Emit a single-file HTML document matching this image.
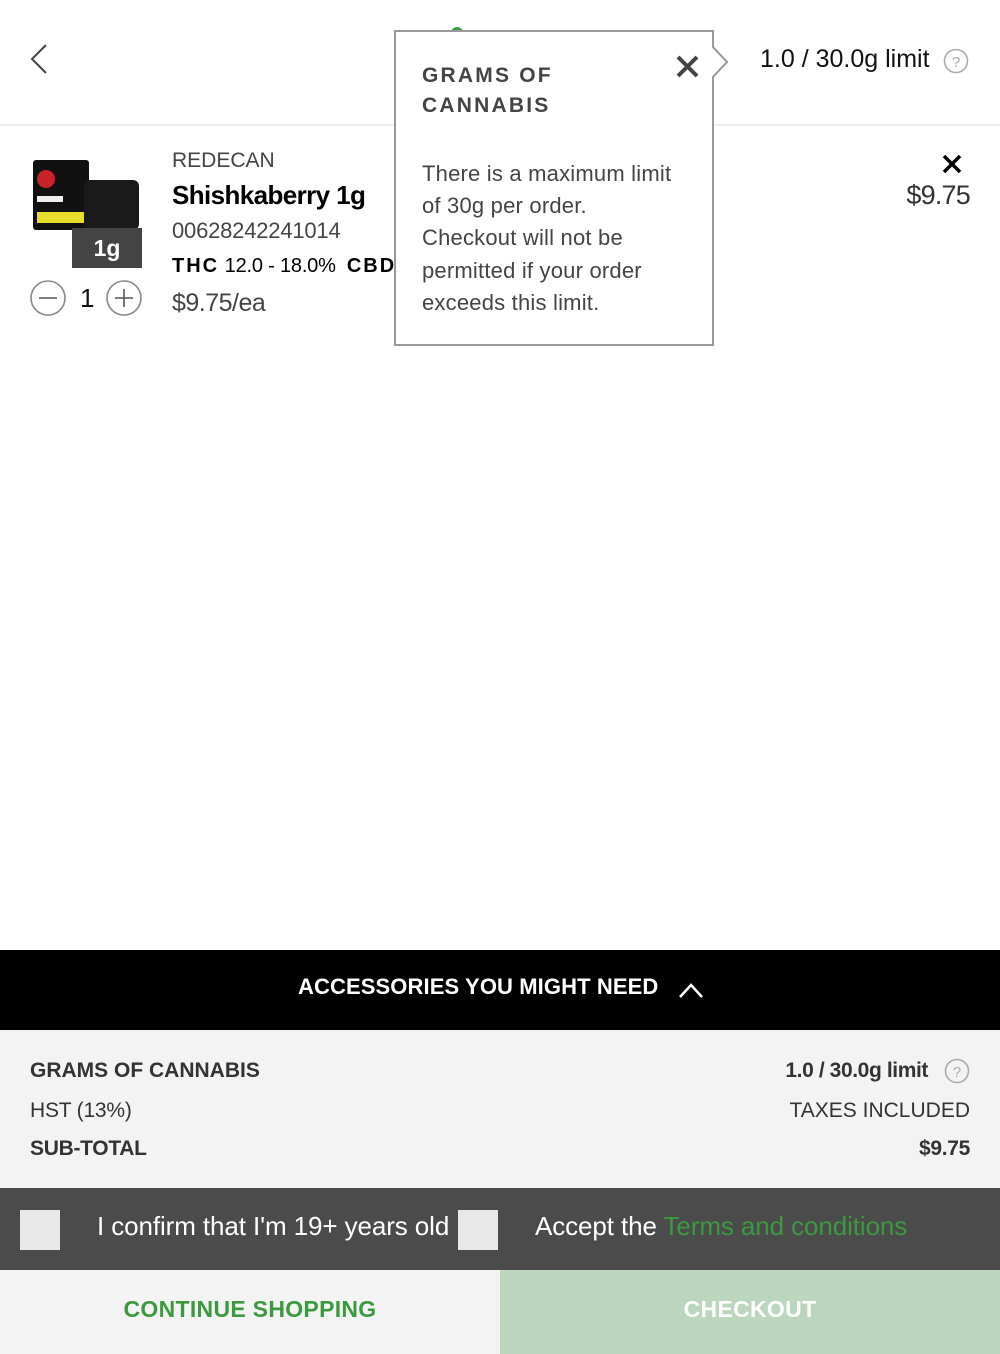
<!DOCTYPE html>
<html><head><meta charset="utf-8"><style>
*{margin:0;padding:0;box-sizing:border-box}
body{width:1000px;height:1354px;background:#fff;font-family:"Liberation Sans",sans-serif;position:relative;overflow:hidden;color:#222}
.a{position:absolute;white-space:nowrap}
</style></head><body>
<svg class="a" style="left:28px;top:42px" width="22" height="34"><path d="M18 3 L4 17 L18 31" stroke="#444" stroke-width="2" fill="none"/></svg>
<div class="a" style="left:451px;top:27px;width:12px;height:12px;border-radius:6px;background:#3a9a44"></div>
<div class="a" style="left:760px;top:45px;font-size:25px;color:#111;letter-spacing:0px">1.0 / 30.0g limit</div>
<svg class="a" style="left:943px;top:48px" width="26" height="26"><circle cx="13" cy="13" r="11.5" stroke="#aaa" stroke-width="1.6" fill="none"/><text x="13" y="19" font-size="15" text-anchor="middle" fill="#aaa" font-family="Liberation Sans">?</text></svg>
<div class="a" style="left:0;top:124px;width:1000px;height:2px;background:#eee"></div>
<div class="a" style="left:33px;top:160px;width:56px;height:70px;background:#111;border-radius:3px"></div>
<div class="a" style="left:37px;top:170px;width:18px;height:18px;border-radius:9px;background:#c8222b"></div>
<div class="a" style="left:37px;top:212px;width:48px;height:11px;background:#e8dc2a"></div>
<div class="a" style="left:37px;top:196px;width:26px;height:6px;background:#eee"></div>
<div class="a" style="left:84px;top:180px;width:55px;height:50px;background:#1a1a1a;border-radius:6px"></div>
<div class="a" style="left:72px;top:228px;width:70px;height:40px;background:#444;color:#fff;font-weight:bold;font-size:23px;text-align:center;line-height:40px">1g</div>
<svg class="a" style="left:29px;top:280px" width="116" height="36"><circle cx="19" cy="18" r="17" stroke="#888" stroke-width="1.6" fill="none"/><path d="M10 18h18" stroke="#555" stroke-width="1.6"/><circle cx="95" cy="18" r="17" stroke="#888" stroke-width="1.6" fill="none"/><path d="M86 18h18M95 9v18" stroke="#555" stroke-width="1.6"/></svg>
<div class="a" style="left:80px;top:283px;font-size:26px;color:#111">1</div>
<div class="a" style="left:172px;top:149px;font-size:21px;color:#444">REDECAN</div>
<div class="a" style="left:172px;top:180px;font-size:26px;font-weight:bold;color:#000;letter-spacing:-0.6px">Shishkaberry 1g</div>
<div class="a" style="left:172px;top:218px;font-size:22px;color:#444;letter-spacing:-0.2px">00628242241014</div>
<div class="a" style="left:172px;top:255px;font-size:20px;color:#000"><b style="letter-spacing:2px">THC</b> <span style="letter-spacing:-0.2px">12.0 - 18.0%</span> &nbsp;<b style="letter-spacing:2px">CBD</b></div>
<div class="a" style="left:172px;top:289px;font-size:25px;color:#444;letter-spacing:-0.5px">$9.75/ea</div>
<svg class="a" style="left:942px;top:154px" width="20" height="20"><path d="M2 2L18 18M18 2L2 18" stroke="#000" stroke-width="3.5"/></svg>
<div class="a" style="right:30px;top:180px;font-size:27px;color:#333;letter-spacing:-0.8px">$9.75</div>
<div class="a" style="left:394px;top:30px;width:320px;height:316px;background:#fff;border:2px solid #999"></div>
<svg class="a" style="left:712px;top:44px" width="18" height="36"><path d="M0 2 L15 18 L0 34" stroke="#999" stroke-width="2" fill="#fff"/></svg>
<div class="a" style="left:422px;top:61px;font-size:21px;font-weight:bold;color:#444;letter-spacing:2.2px;line-height:30px">GRAMS OF<br>CANNABIS</div>
<svg class="a" style="left:676px;top:55px" width="23" height="23"><path d="M2 2L21 21M21 2L2 21" stroke="#444" stroke-width="4"/></svg>
<div class="a" style="left:422px;top:158px;font-size:22px;color:#444;line-height:32.2px;letter-spacing:0.2px">There is a maximum limit<br>of 30g per order.<br>Checkout will not be<br>permitted if your order<br>exceeds this limit.</div>
<div class="a" style="left:0;top:950px;width:1000px;height:80px;background:#000"></div>
<div class="a" style="left:298px;top:974px;font-size:22px;font-weight:bold;color:#fff;letter-spacing:0.1px">ACCESSORIES YOU MIGHT NEED</div>
<svg class="a" style="left:677px;top:978px" width="28" height="22"><path d="M3 19 L14 7 L25 19" stroke="#fff" stroke-width="2.5" fill="none"/></svg>
<div class="a" style="left:0;top:1030px;width:1000px;height:158px;background:#f3f3f3"></div>
<div class="a" style="left:30px;top:1059px;font-size:21px;font-weight:bold;color:#333;letter-spacing:0px">GRAMS OF CANNABIS</div>
<div class="a" style="left:30px;top:1099px;font-size:21px;color:#333;letter-spacing:-0.2px">HST (13%)</div>
<div class="a" style="left:30px;top:1137px;font-size:21px;font-weight:bold;color:#333;letter-spacing:-0.3px">SUB-TOTAL</div>
<div class="a" style="right:72px;top:1059px;font-size:21px;font-weight:bold;color:#333;letter-spacing:-0.4px">1.0 / 30.0g limit</div>
<svg class="a" style="left:944px;top:1058px" width="26" height="26"><circle cx="13" cy="13" r="11.5" stroke="#aaa" stroke-width="1.6" fill="none"/><text x="13" y="19" font-size="15" text-anchor="middle" fill="#aaa" font-family="Liberation Sans">?</text></svg>
<div class="a" style="right:30px;top:1099px;font-size:21px;color:#333;letter-spacing:0px">TAXES INCLUDED</div>
<div class="a" style="right:30px;top:1137px;font-size:21px;font-weight:bold;color:#333;letter-spacing:-0.3px">$9.75</div>
<div class="a" style="left:0;top:1188px;width:1000px;height:82px;background:#4b4b4b"></div>
<div class="a" style="left:20px;top:1210px;width:40px;height:40px;background:#e8e8e8"></div>
<div class="a" style="left:97px;top:1211px;font-size:26px;color:#fff;letter-spacing:-0.1px">I confirm that I'm 19+ years old</div>
<div class="a" style="left:458px;top:1210px;width:40px;height:40px;background:#e8e8e8"></div>
<div class="a" style="left:535px;top:1211px;font-size:26px;color:#fff;letter-spacing:-0.1px">Accept the <span style="color:#3b9a40">Terms and conditions</span></div>
<div class="a" style="left:0;top:1270px;width:500px;height:84px;background:#f3f3f3"></div>
<div class="a" style="left:0;top:1296px;width:500px;text-align:center;font-size:23px;font-weight:bold;color:#3b9a40;letter-spacing:0.3px">CONTINUE SHOPPING</div>
<div class="a" style="left:500px;top:1270px;width:500px;height:84px;background:#bcd6bd"></div>
<div class="a" style="left:500px;top:1296px;width:500px;text-align:center;font-size:23px;font-weight:bold;color:#fff;letter-spacing:0.3px">CHECKOUT</div>
</body></html>
